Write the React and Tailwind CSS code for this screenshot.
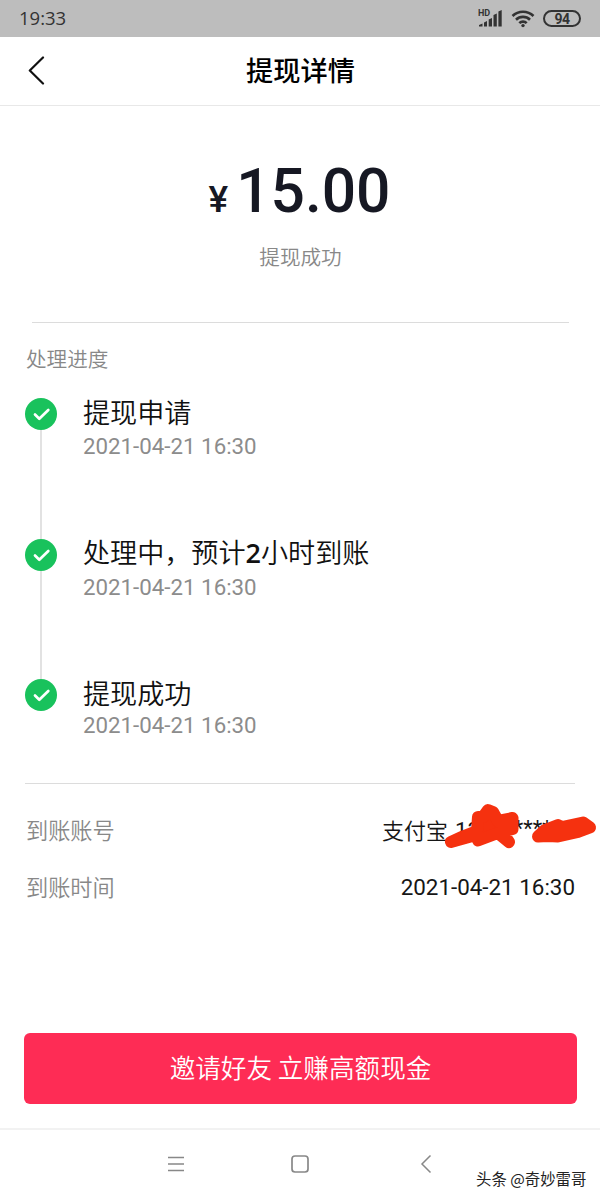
import React from 'react';

const steps = [
  { title: '提现申请', time: '2021-04-21 16:30', height: 'h-[141px]', titleGap: 'mt-0', timeGap: 'mt-[7px]' },
  {
    title: (
      <>
        处理中，预计<span className="font-['Open_Sans',sans-serif] text-[27px] font-semibold">2</span>小时到账
      </>
    ),
    time: '2021-04-21 16:30',
    height: 'h-[140px]',
    titleGap: '-mt-px',
    timeGap: 'mt-[8px]',
  },
  { title: '提现成功', time: '2021-04-21 16:30', height: 'h-[88px]', titleGap: 'mt-0', timeGap: 'mt-[5px]' },
];

function StatusBar() {
  return (
    <div className="flex h-[37px] shrink-0 items-center justify-between bg-[#bdbdbd] px-[19px] text-[#333333]">
      <span className="font-['Open_Sans',sans-serif] text-[18.5px] leading-none">19:33</span>
      <div className="flex items-center">
        <svg className="mr-[8px] h-[20px] w-[25px]" viewBox="0 0 25 20" fill="currentColor">
          <text x="0" y="7" fontSize="9" fontWeight="700" fontFamily="Roboto">HD</text>
          <path d="M1 17.5V16L4.5 14.5V17.5ZM6 17.5V13.5L9 12V17.5ZM10.7 17.5V10.5L14 9V17.5ZM15.5 17.5V6L18.8 4.5V17.5ZM20.4 17.5V2.5L23.7 1V17.5Z" />
        </svg>
        <svg className="mr-[8px] h-[20px] w-[24px]" viewBox="0 0 24 20" fill="none" stroke="currentColor" strokeWidth="2.6">
          <path d="M1.5 7a15 15 0 0 1 21 0" />
          <path d="M5 10.7a10 10 0 0 1 14 0" />
          <path d="M8.3 14.2a5.2 5.2 0 0 1 7.4 0" />
          <circle cx="12" cy="16.6" r="1.7" fill="currentColor" stroke="none" />
        </svg>
        <span className="flex h-[17px] w-[38px] items-center justify-center rounded-full border-2 border-[#333333] font-[Roboto,sans-serif] text-[14px] leading-none font-bold tracking-[-0.5px]">
          94
        </span>
      </div>
    </div>
  );
}

function Header() {
  return (
    <header className="grid h-[69px] shrink-0 grid-cols-[60px_1fr_60px] items-center border-b border-[#e8e8e8]">
      <svg className="ml-[28px] h-[30px] w-[18px]" viewBox="0 0 18 30" fill="none" stroke="#111" strokeWidth="2.2" strokeLinecap="round" strokeLinejoin="round">
        <path d="M15 1.5L1.8 14.5L15 27.5" />
      </svg>
      <h1 className="pb-[2px] pl-px text-center text-[27.2px] leading-none font-medium text-black">提现详情</h1>
    </header>
  );
}

function CheckBadge() {
  return (
    <svg className="h-8 w-8 shrink-0" viewBox="0 0 32 32" fill="none">
      <circle cx="16" cy="16" r="16" fill="#19c25c" />
      <path d="M10 16.5L14.3 20.8L23.3 12" stroke="#fff" strokeWidth="2.7" strokeLinecap="round" strokeLinejoin="round" />
    </svg>
  );
}

function Step({ step, last }) {
  return (
    <li className={`flex ${step.height}`}>
      <div className="flex w-8 flex-col items-center">
        <CheckBadge />
        {!last && <div className="w-[2px] flex-1 bg-[#e2e2e2]" />}
      </div>
      <div className="ml-[26px] whitespace-nowrap">
        <div className={`h-[28px] text-[27.1px] leading-[27px] font-[350] text-[#111111] ${step.titleGap}`}>{step.title}</div>
        <div className={`font-[Roboto,sans-serif] text-[22.3px] leading-[26px] text-[#8c8c8c] ${step.timeGap}`}>{step.time}</div>
      </div>
    </li>
  );
}

// Red marker strokes that hide the account number
function Scribble() {
  return (
    <svg className="absolute top-[-19px] left-[58px] h-[52px] w-[160px]" viewBox="0 0 160 52" fill="#f5310f" stroke="#f5310f" strokeWidth="12" strokeLinejoin="round" strokeLinecap="round">
      <path d="M11 41L24 35L37 30L38 16L43 16L48 9L53 11L58 20L72.5 17L72.5 28L62 31L69 41L58 32L38 39.5L36 34Z" />
      <path d="M98 35.5L105 29L118 24L122 26L143 21.5L150 26.5L138 31L118 35.5L108 35Z" />
    </svg>
  );
}

export default function App() {
  return (
    <div className="flex h-[1200px] w-[600px] flex-col overflow-hidden bg-white font-['Noto_Sans_CJK_SC',sans-serif]">
      <StatusBar />
      <Header />

      <section className="mr-[31px] ml-[32px] flex h-[217px] shrink-0 flex-col items-center border-b border-[#dcdcdc]">
        <div className="mt-[50px] mr-[2px] flex items-baseline font-[Roboto,sans-serif] font-medium text-[#161823]">
          <span className="mr-[8px] text-[37px] leading-[72px]">¥</span>
          <span className="text-[60.5px] leading-[72px]">15.00</span>
        </div>
        <p className="mt-[9px] text-[20.6px] leading-[22px] font-[350] text-[#888888]">提现成功</p>
      </section>

      <section className="mx-[25px] h-[461px] shrink-0 border-b border-[#dcdcdc]">
        <h2 className="mt-[24px] pl-px text-[20.6px] leading-[22px] font-[350] text-[#888888]">处理进度</h2>
        <ul className="mt-[29px]">
          {steps.map((step, i) => (
            <Step key={i} step={step} last={i === steps.length - 1} />
          ))}
        </ul>
      </section>

      <section className="mx-[25px] h-[249px] shrink-0 pt-[18px]">
        <div className="flex h-[57px] items-center justify-between">
          <span className="pb-[3px] pl-px text-[22.2px] leading-none font-[350] text-[#888888]">到账账号</span>
          <div className="relative mr-[-21px] flex h-[22px] w-[214px] items-center text-[22px] leading-none whitespace-nowrap text-[#161616]">
            <span className="pb-[4px] font-[350]">支付宝</span>
            <span className="ml-[7px] font-[Roboto,sans-serif]">13</span>
            <span className="ml-[34px] pb-[3px] font-[Roboto,sans-serif]">****</span>
            <Scribble />
          </div>
        </div>
        <div className="flex h-[57px] items-center justify-between">
          <span className="pb-[3px] pl-px text-[22.2px] leading-none font-[350] text-[#888888]">到账时间</span>
          <span className="font-[Roboto,sans-serif] text-[22.4px] leading-none text-[#161616]">2021-04-21 16:30</span>
        </div>
      </section>

      <button className="mr-[23px] ml-[24px] flex h-[71px] shrink-0 items-center justify-center rounded-md bg-[#fe2c55] pb-[4px] text-[25.6px] leading-none font-[350] text-white">
        邀请好友 立赚高额现金
      </button>

      <nav className="mt-[24px] flex flex-1 border-t-2 border-[#f2f2f2] pt-[22px] pl-[164px] text-[#888888]">
        <svg className="h-6 w-6 shrink-0" viewBox="0 0 24 24" fill="none" stroke="currentColor" strokeWidth="1.6">
          <path d="M4 5.5H20M4 12H20M4 18.5H20" />
        </svg>
        <svg className="ml-[100px] h-6 w-6 shrink-0" viewBox="0 0 24 24" fill="none" stroke="currentColor" strokeWidth="1.7">
          <rect x="4" y="4" width="16" height="16" rx="3" />
        </svg>
        <svg className="ml-[102px] h-6 w-6 shrink-0" viewBox="0 0 24 24" fill="none" stroke="currentColor" strokeWidth="1.5">
          <path d="M16.5 3.5L8 12L16.5 20.5" />
        </svg>
        <span className="mt-[19px] ml-[38px] text-[15.4px] leading-none whitespace-nowrap text-[#222222] [text-shadow:1px_1px_1px_#ffffff]">
          头条 @奇妙雷哥
        </span>
      </nav>
    </div>
  );
}
